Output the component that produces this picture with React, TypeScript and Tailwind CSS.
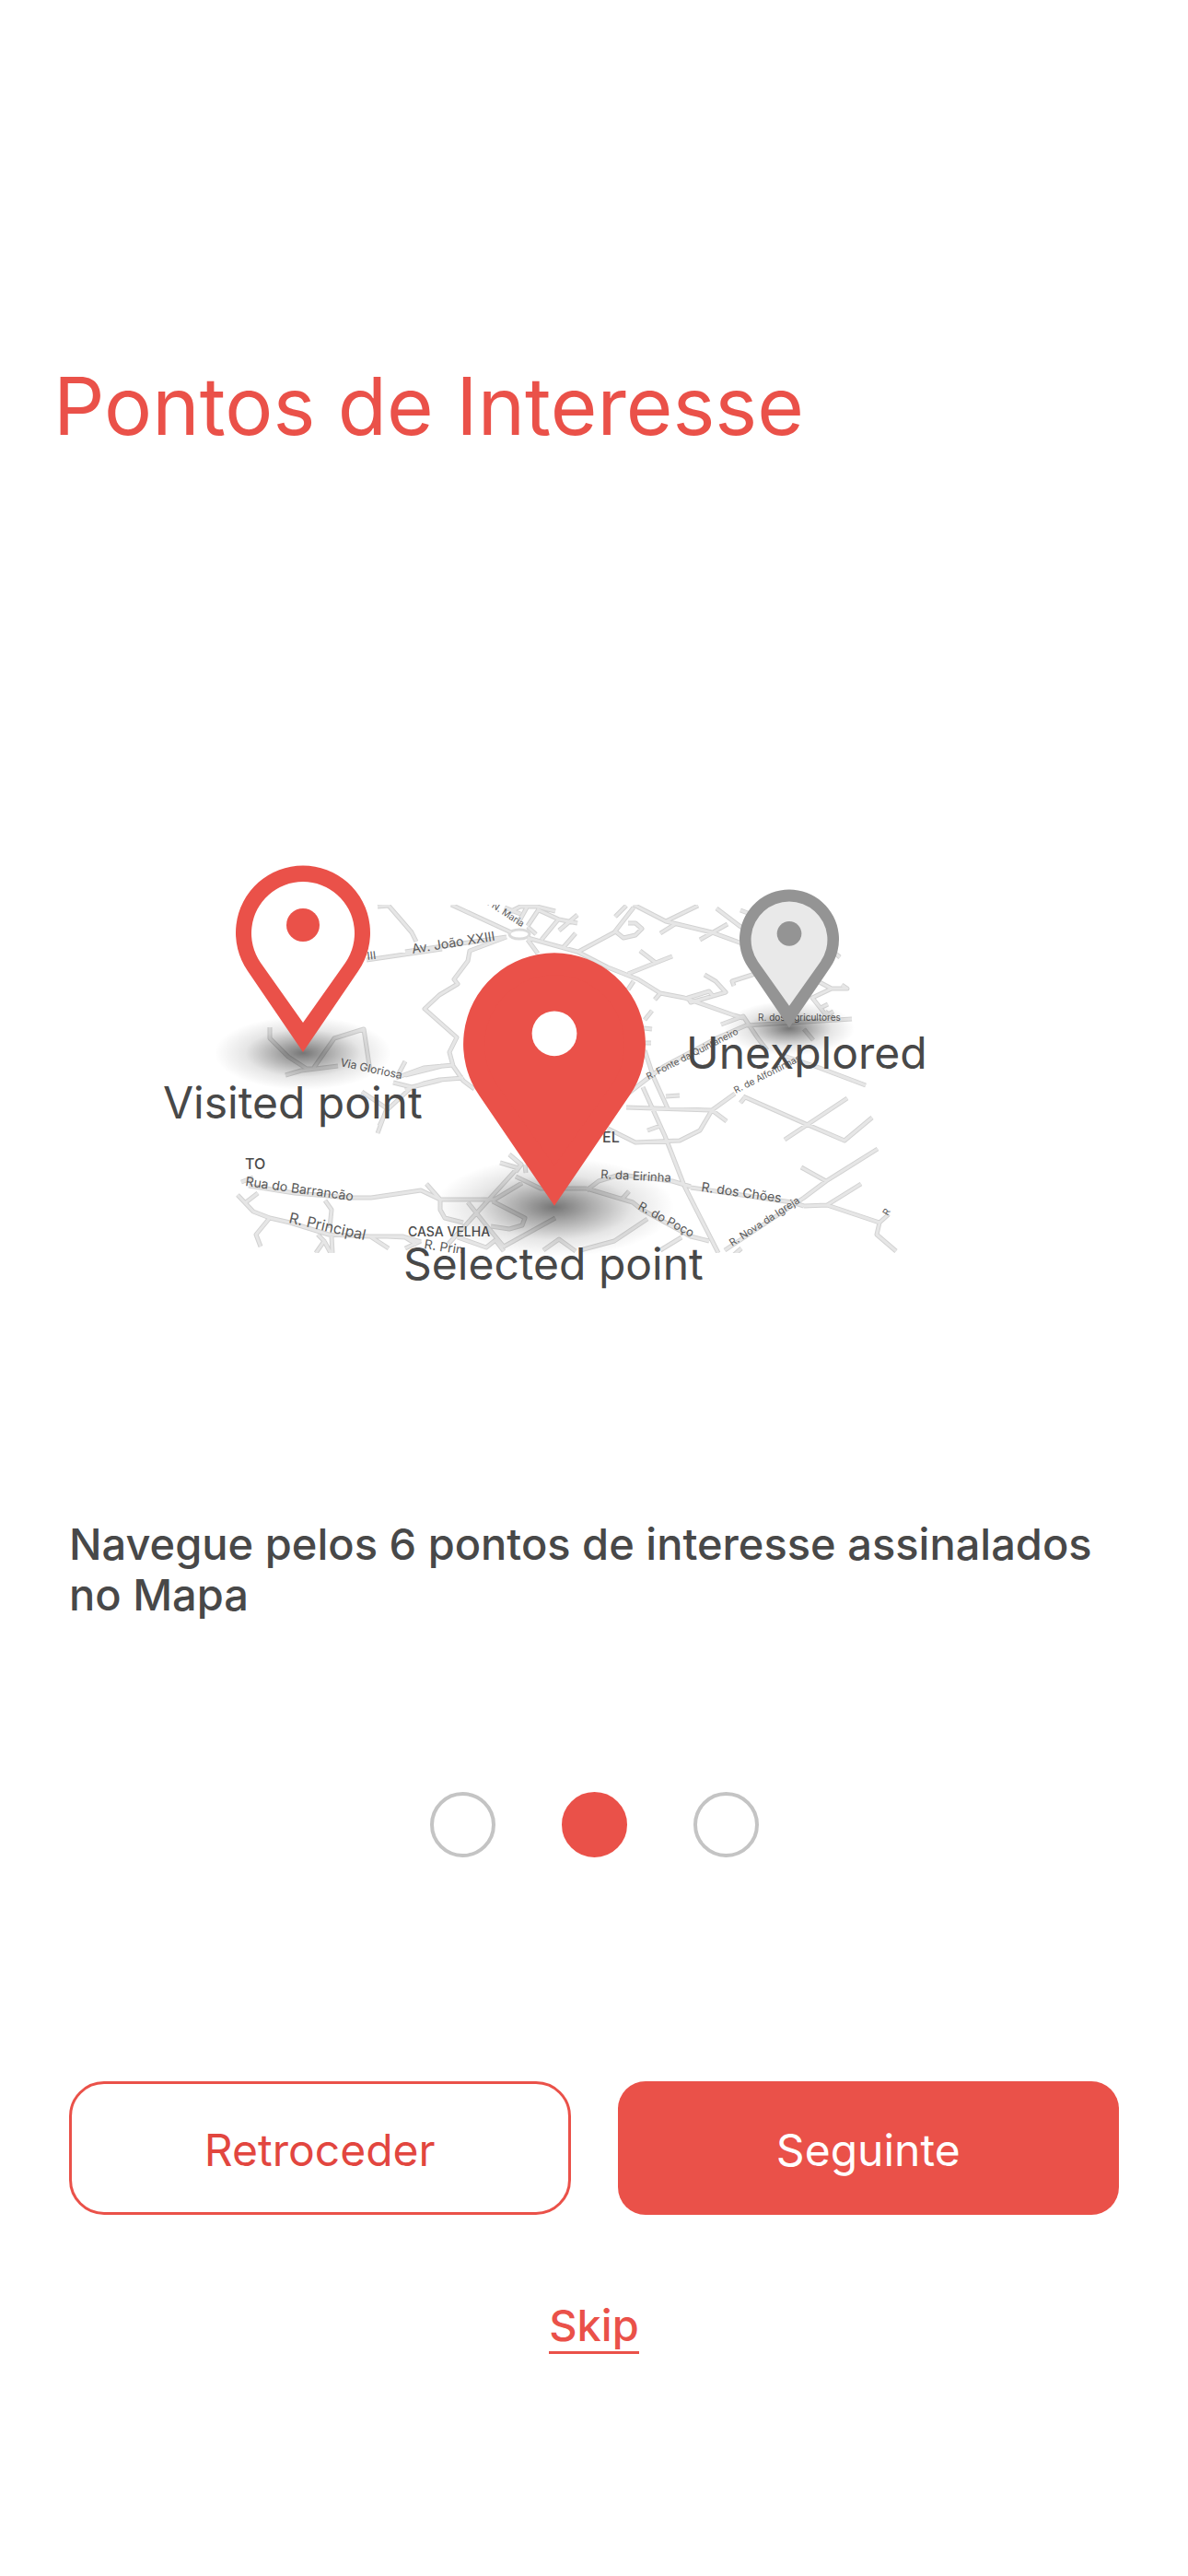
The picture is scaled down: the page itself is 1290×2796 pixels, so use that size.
import { useState } from "react";

const roads = [
  // north west
  "M490 82L555 112M573 120L584 135M550 117L440 133M398 142L480 130M410 84L422 83M422 83L435 98L447 112L452 122",
  "M550 117L510 132L508 143L493 163L497 168L477 180L461 195L496 226L488 242L492 257L503 273L515 282",
  "M430 270L460 259L492 256M440 283L460 276L477 272L503 270",
  "M548 85L565 92M553 90L565 84L583 84L603 89M572 85L562 103M585 87L573 105M583 87L607 98L627 102M607 97L588 120M627 93L607 110M625 113L612 128M573 106L582 114",
  // north east
  "M573 118L627 133L660 150L693 163L717 178L743 183L797 202L807 205M628 133L667 112L688 85M680 83L668 95",
  "M688 82L723 100L773 112L803 123L830 132M723 100L758 83M733 103L717 113M778 86L803 105L820 115M790 103L760 120M804 88L820 94",
  "M667 110L677 118L690 115L697 108L690 102L682 102M682 157L712 145L730 138M695 132L712 145M688 165L682 174M717 178L711 185M708 197L700 207M699 216L708 217M699 232L707 232",
  "M765 158L777 165L788 177L750 188L747 183L770 176L774 181M797 170L795 165L820 157M783 212L807 203L823 227L833 240",
  "M884 163L903 173L920 173L914 169M903 173L882 183L897 202L905 198M891 194L899 190M896 198L908 208M912 139L906 134M873 217L883 229M887 258L940 278M848 245L887 258",
  // east
  "M678 290L700 273L720 258L780 226L810 213L925 206M700 240L710 270L725 303M723 290L738 289M680 302L773 305L798 287",
  "M807 290L875 320L917 338L947 313M920 292L852 337M809 291L804 297M773 305L789 317M773 305L760 327L738 338L690 340L660 325",
  "M698 280L722 333L743 387L780 460M703 327L717 322",
  "M953 347L897 382L873 400L787 457M870 367L897 382M935 385L898 408L873 409M898 408L955 427L952 440L973 458M955 427L965 418M750 389L860 405L873 409M805 455L797 462",
  // south
  "M637 392L650 382L673 375L730 382L750 388M637 390L687 405L697 413L750 442L770 447M740 443L717 457M683 393L675 402",
  "M380 400L403 400L457 392L478 402L537 402L567 384M463 385L478 402L478 413L483 422L503 427M487 450L530 403L560 370",
  "M508 405L528 430L547 453M535 404L570 422L567 430L553 434L533 431M560 377L587 390L637 390M553 353L566 364L560 372M543 362L563 368M570 364L571 373",
  "M547 453L603 422M590 457L607 445L625 458M630 457L667 447L703 423M420 442L440 443L453 451M497 443L528 454L538 446L547 458M440 455L457 447",
  // south west
  "M262 383L275 378M270 387L320 395L380 400M267 405L280 395M258 397L275 415L293 422L315 427L357 440L402 442L437 442L457 448",
  "M292 423L278 440L283 453M353 403L360 413L358 433M345 440L352 447L343 460M352 447L359 460M360 442L361 460M402 442L422 455",
  "M293 215L293 227L313 247L333 260L340 260L363 227L395 217L402 263M310 267L327 262L367 257M440 267L480 257M440 252L432 267",
  "M427 275L447 280L480 272M393 285L420 303L410 330M447 280L420 305L412 322",
].join("");

const streets = [
  { name: "Av. João XXIII", x: 448, y: 135, turn: -9, size: 14 },
  { name: "III", x: 399, y: 142, turn: -7, size: 12 },
  { name: "R. N. Maria", x: 523, y: 78, turn: 33, size: 10 },
  { name: "Via Gloriosa", x: 369, y: 257, turn: 12, size: 12 },
  { name: "R. Fonte da Quintaneiro", x: 704, y: 272, turn: -27, size: 10 },
  { name: "R. de Alfontinhas", x: 799, y: 287, turn: -27, size: 10 },
  { name: "R. dos Agricultores", x: 823, y: 208, turn: 0, size: 10 },
  { name: "Rua do Barrancão", x: 266, y: 387, turn: 8, size: 14 },
  { name: "R. Principal", x: 313, y: 427, turn: 13, size: 16 },
  { name: "R. Prin", x: 460, y: 455, turn: 9, size: 14 },
  { name: "R. da Eirinha", x: 652, y: 379, turn: 3, size: 13 },
  { name: "R. do Poço", x: 692, y: 412, turn: 28, size: 13 },
  { name: "R. dos Chões", x: 761, y: 393, turn: 8, size: 14 },
  { name: "R. Nova da Igreja", x: 795, y: 453, turn: -33, size: 11 },
  { name: "R", x: 964, y: 420, turn: -60, size: 10 },
];

const places = [
  { name: "TO", x: 266, y: 369, size: 16 },
  { name: "EL", x: 654, y: 340, size: 16 },
  { name: "CASA VELHA", x: 443, y: 442, size: 14 },
];

type PinProps = {
  x: number;
  y: number;
  scale: number;
  color: string;
  fill: string;
  dot: string;
};

function Pin({ x, y, scale, color, fill, dot }: PinProps) {
  return (
    <g transform={`translate(${x} ${y}) scale(${scale})`}>
      <ellipse cx="0" cy="130" rx="96" ry="40" fill="url(#shadow)" />
      <path d="M0 129L-60 41A73 73 0 1 1 60 41Z" className={color} />
      <path d="M0 97L-46 32A56 56 0 1 1 46 32Z" className={fill} />
      <circle cx="0" cy="-9" r="18" className={dot} />
    </g>
  );
}

function MapIllustration() {
  return (
    <svg viewBox="0 0 1290 540" className="block w-full">
      <defs>
        <radialGradient id="shadow">
          <stop offset="0" stopColor="#000" stopOpacity="0.54" />
          <stop offset="0.3" stopColor="#000" stopOpacity="0.33" />
          <stop offset="0.65" stopColor="#000" stopOpacity="0.1" />
          <stop offset="1" stopColor="#000" stopOpacity="0" />
        </radialGradient>
        <clipPath id="map-area">
          <rect x="200" y="82" width="800" height="378" />
        </clipPath>
      </defs>

      <g clipPath="url(#map-area)" fill="none" strokeLinejoin="round">
        <path d={roads} className="stroke-[#d2d2d2]" strokeWidth="5" />
        <ellipse cx="564" cy="114" rx="11" ry="5" className="stroke-[#dadada]" strokeWidth="3" />
        <path d={roads} className="stroke-[#e6e6e6]" strokeWidth="3" />
      </g>
      <g clipPath="url(#map-area)" className="fill-[#5a5a5a]">
        {streets.map((s) => (
          <text
            key={`${s.name}-${s.x}`}
            transform={`translate(${s.x} ${s.y}) rotate(${s.turn})`}
            fontSize={s.size}
          >
            {s.name}
          </text>
        ))}
      </g>
      <g className="fill-[#4a4a4a] font-medium">
        {places.map((p) => (
          <text key={p.name} x={p.x} y={p.y} fontSize={p.size}>
            {p.name}
          </text>
        ))}
      </g>

      <Pin x={329} y={113} scale={1} color="fill-[#ea5149]" fill="fill-white" dot="fill-[#ea5149]" />
      <Pin x={857} y={120} scale={0.74} color="fill-[#949494]" fill="fill-[#e9e9e9]" dot="fill-[#949494]" />
      <Pin x={602} y={234} scale={1.355} color="fill-[#ea5149]" fill="fill-[#ea5149]" dot="fill-white" />

      <g className="fill-[#484848]" fontSize="48">
        <text x="177" y="314">Visited point</text>
        <text x="438" y="489">Selected point</text>
        <text x="745" y="260">Unexplored</text>
      </g>
    </svg>
  );
}

const steps = ["Passo 1", "Passo 2", "Passo 3"];

export default function App() {
  const [step, setStep] = useState(1);

  return (
    <main className="min-h-screen bg-white pb-48 font-['Inter',sans-serif] text-[#484848]">
      <h1 className="px-[58px] pt-[391px] text-[87px] leading-[100px] text-[#ea5149]">
        Pontos de Interesse
      </h1>

      <div className="mt-[409px]">
        <MapIllustration />
      </div>

      <p className="mt-[208px] px-[75px] text-[47px] leading-[55px] font-medium">
        Navegue pelos 6 pontos de interesse assinalados no Mapa
      </p>

      <div className="mt-[187px] flex justify-center gap-[72px]">
        {steps.map((label, i) => (
          <input
            key={label}
            type="radio"
            name="step"
            aria-label={label}
            checked={step === i}
            onChange={() => setStep(i)}
            className="size-[71px] appearance-none rounded-full border-4 border-[#c4c4c4] checked:border-[#ea5149] checked:bg-[#ea5149]"
          />
        ))}
      </div>

      <div className="mt-[243px] grid grid-cols-2 gap-[51px] px-[75px] text-[48px]">
        <button
          type="button"
          onClick={() => setStep(Math.max(step - 1, 0))}
          className="h-[145px] rounded-[38px] border-3 border-[#ea5149] pt-1 text-[#e2463f]"
        >
          Retroceder
        </button>
        <button
          type="button"
          onClick={() => setStep(Math.min(step + 1, steps.length - 1))}
          className="h-[145px] rounded-[30px] bg-[#ea5149] pt-1 text-white"
        >
          Seguinte
        </button>
      </div>

      <div className="mt-[92px] flex justify-center">
        <a
          href="#"
          className="border-b-3 border-[#ea5149] text-[47px] leading-[56px] font-medium text-[#ea5149]"
        >
          Skip
        </a>
      </div>
    </main>
  );
}
